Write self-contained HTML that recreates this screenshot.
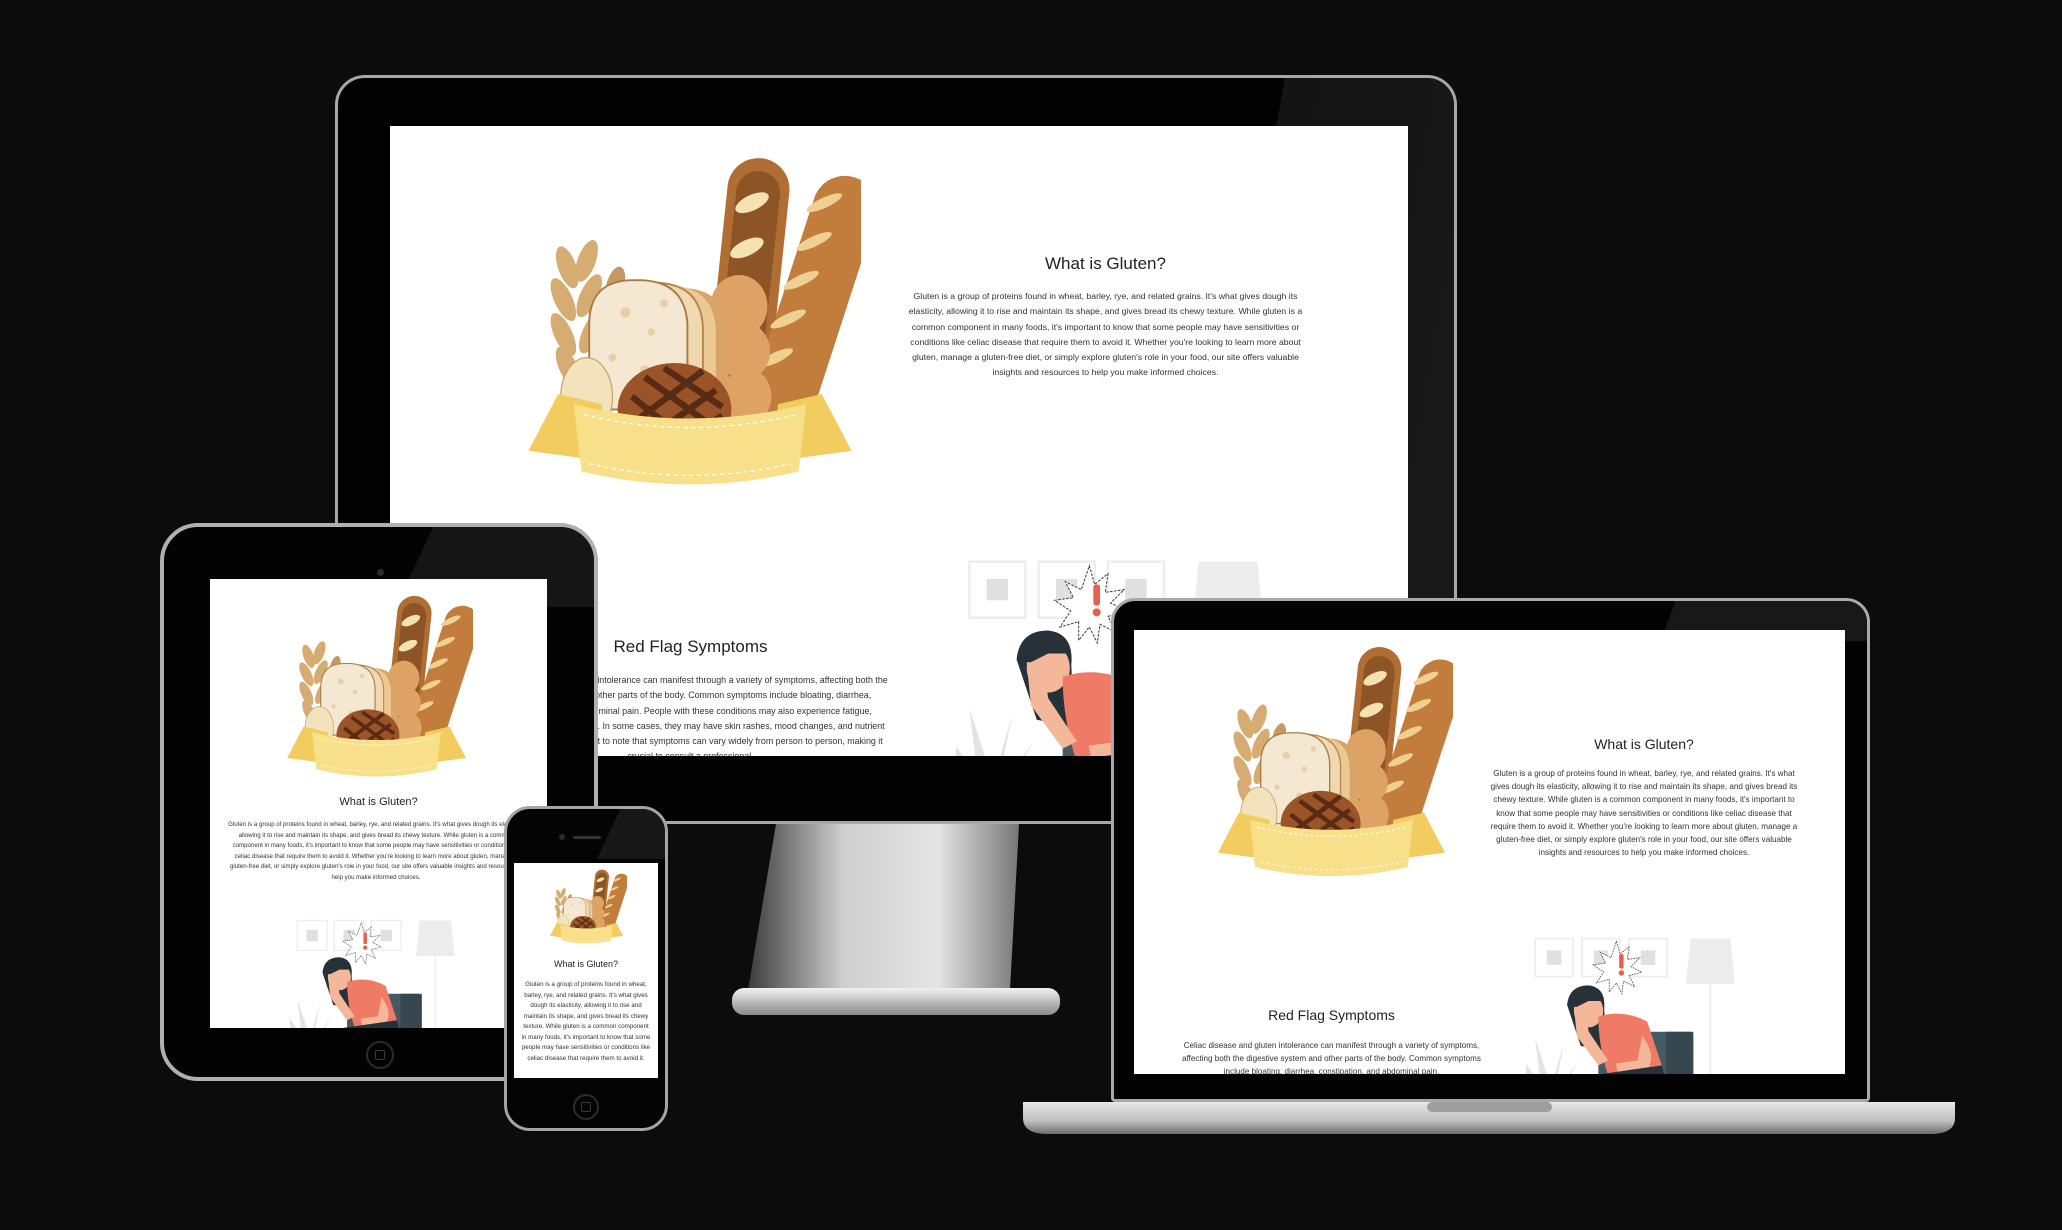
<!DOCTYPE html>
<html><head><meta charset="utf-8">
<style>
*{margin:0;padding:0;box-sizing:border-box}
html,body{width:2062px;height:1230px;overflow:hidden;background:#0c0c0c;font-family:"Liberation Sans",sans-serif}
.abs{position:absolute}
.scr{position:absolute;background:#fff;overflow:hidden}
.scr h2{position:absolute;font-weight:400;color:#222;text-align:center;white-space:nowrap}
.scr p{position:absolute;color:#333;text-align:center}
svg.il{position:absolute;display:block}
</style></head><body>
<svg width="0" height="0" style="position:absolute">
<defs>
<symbol id="bread" viewBox="0 0 260 260">
 <g fill="#d6ac72">
  <ellipse cx="35" cy="90" rx="7" ry="17" transform="rotate(-20 35 90)"/>
  <ellipse cx="50" cy="85" rx="7" ry="17" transform="rotate(20 50 85)"/>
  <ellipse cx="32" cy="115" rx="7" ry="18" transform="rotate(-25 32 115)"/>
  <ellipse cx="52" cy="112" rx="7" ry="18" transform="rotate(25 52 112)"/>
  <ellipse cx="32" cy="142" rx="7" ry="18" transform="rotate(-25 32 142)"/>
  <ellipse cx="54" cy="140" rx="7" ry="18" transform="rotate(25 54 140)"/>
  <ellipse cx="36" cy="168" rx="7" ry="18" transform="rotate(-25 36 168)"/>
  <ellipse cx="56" cy="166" rx="7" ry="18" transform="rotate(25 56 166)"/>
 </g>
 <g fill="#c49a62">
  <ellipse cx="72" cy="105" rx="7" ry="16" transform="rotate(15 72 105)"/>
  <ellipse cx="70" cy="130" rx="7" ry="16" transform="rotate(-15 70 130)"/>
  <ellipse cx="78" cy="128" rx="7" ry="16" transform="rotate(20 78 128)"/>
 </g>
 <rect x="150" y="5" width="48" height="220" rx="24" fill="#b06e35" transform="rotate(6 174 115)"/>
 <rect x="157" y="15" width="34" height="200" rx="17" fill="#8d5526" transform="rotate(6 174 115)"/>
 <g fill="#f4e2b3">
  <ellipse cx="178" cy="40" rx="14" ry="6" transform="rotate(-25 178 40)"/>
  <ellipse cx="174" cy="75" rx="14" ry="6" transform="rotate(-25 174 75)"/>
  <ellipse cx="170" cy="110" rx="14" ry="6" transform="rotate(-25 170 110)"/>
 </g>
 <rect x="198" y="15" width="50" height="225" rx="25" fill="#c27c3c" transform="rotate(18 223 127)"/>
 <g fill="#f0cf93">
  <ellipse cx="234" cy="40" rx="15" ry="4" transform="rotate(-25 234 40)"/>
  <ellipse cx="226" cy="70" rx="15" ry="4" transform="rotate(-25 226 70)"/>
  <ellipse cx="216" cy="100" rx="15" ry="4" transform="rotate(-25 216 100)"/>
  <ellipse cx="206" cy="130" rx="15" ry="4" transform="rotate(-25 206 130)"/>
  <ellipse cx="196" cy="160" rx="15" ry="4" transform="rotate(-25 196 160)"/>
 </g>
 <g fill="#dea265">
  <ellipse cx="168" cy="120" rx="22" ry="24"/>
  <ellipse cx="172" cy="155" rx="20" ry="22"/>
  <ellipse cx="174" cy="190" rx="19" ry="22"/>
 </g>
 <path d="M85 200V140Q85 105 120 106Q158 105 160 140V200Z" fill="#d9a468"/>
 <path d="M75 200V138Q75 103 110 104Q148 103 150 138V200Z" fill="#ecc992"/>
 <path d="M65 200V136Q65 101 100 102Q138 101 140 136V200Z" fill="#f0d9b0" stroke="#b7874f" stroke-width="1.5"/>
 <path d="M52 200V134Q52 99 88 100Q126 99 128 134V200Z" fill="#f5e8d2" stroke="#a77a48" stroke-width="1.5"/>
 <g fill="#e8cfa6"><circle cx="80" cy="125" r="4"/><circle cx="100" cy="140" r="3"/><circle cx="70" cy="160" r="3"/><circle cx="110" cy="118" r="3"/><circle cx="95" cy="170" r="4"/></g>
 <ellipse cx="50" cy="190" rx="20" ry="30" fill="#f3e3bc" stroke="#c9a56a"/>
 <ellipse cx="118" cy="200" rx="44" ry="36" fill="#9b5428"/>
 <g stroke="#5a2b14" stroke-width="5" fill="none"><path d="M85 190L135 230M95 175L150 215M110 168L155 198M80 215L140 170M90 228L150 185M110 232L155 205"/></g>
 <path d="M5 232L28 188L62 196L64 240Z" fill="#f2cc5e"/>
 <path d="M255 232L232 188L198 196L196 240Z" fill="#f2cc5e"/>
 <path d="M40 196Q130 218 220 196L214 248Q130 268 46 248Z" fill="#f8e08a"/>
 <path d="M48 204Q130 224 212 204M52 242Q130 260 208 242" stroke="#fff" stroke-dasharray="3 3" fill="none"/>
</symbol>
<symbol id="scene" viewBox="0 0 240 180">
 <g fill="#fff" stroke="#eee" stroke-width="2"><rect x="10" y="5" width="42" height="42"/><rect x="62" y="5" width="42" height="42"/><rect x="114" y="5" width="42" height="42"/></g>
 <g fill="#e0e0e0"><rect x="23" y="18" width="16" height="16"/><rect x="75" y="18" width="16" height="16"/><rect x="127" y="18" width="16" height="16"/></g>
 <path d="M182 5h44l5 50h-54z" fill="#ececec"/>
 <rect x="203" y="55" width="2" height="125" fill="#eee"/>
 <g fill="#e3e3e3"><path d="M10 180L-10 130L18 168Z"/><path d="M18 180L10 115L28 170Z"/><path d="M25 180L42 120L32 172Z"/><path d="M30 180L58 140L38 176Z"/><path d="M5 180L-20 150L10 175Z"/></g>
 <rect x="80" y="108" width="105" height="72" rx="4" fill="#455a64"/>
 <rect x="155" y="108" width="30" height="72" fill="#37474f"/>
 <path d="M100 8l4 14 10-8-2 14 14-2-10 10 12 6-14 4 6 12-12-6-2 14-6-12-8 10 0-14-14 4 8-12-12-8 14-2-6-12 12 6z" fill="#fff" stroke="#444" stroke-width="0.8" stroke-dasharray="2 1"/>
 <rect x="103" y="22" width="5" height="16" rx="2" fill="#e8604c"/>
 <circle cx="105.5" cy="43" r="3" fill="#e8604c"/>
 <g transform="translate(-28 -6) scale(1.08)">
 <path d="M68 78Q70 58 90 58Q108 60 106 82L108 125L82 120Z" fill="#263238"/>
 <ellipse cx="90" cy="84" rx="15" ry="17" fill="#f4b79a"/>
 <path d="M74 82Q72 68 90 66Q100 66 104 74L90 74Z" fill="#263238"/>
 <path d="M100 90Q125 82 150 95L165 140L110 150Q100 120 100 90Z" fill="#ef7b67"/>
 <path d="M75 80L78 110L100 140L110 135L90 105L86 80Z" fill="#f4b79a"/>
 <path d="M145 110Q160 130 150 145L120 148L118 138L140 135Z" fill="#f4b79a"/>
 <path d="M95 150L165 140L175 180H88Z" fill="#263238"/>
 </g>
</symbol>
</defs>
</svg>

<svg class="abs" style="left:0;top:0" width="2062" height="1230">
 <defs>
  <linearGradient id="st" x1="0" x2="1"><stop offset="0" stop-color="#3c3c3c"/><stop offset=".35" stop-color="#cfcfcf"/><stop offset=".7" stop-color="#e4e4e4"/><stop offset="1" stop-color="#777"/></linearGradient>
  <linearGradient id="bs" x1="0" y1="0" x2="0" y2="1"><stop offset="0" stop-color="#f2f2f2"/><stop offset="1" stop-color="#8a8a8a"/></linearGradient>
  <linearGradient id="lb" x1="0" y1="0" x2="0" y2="1"><stop offset="0" stop-color="#e8e8e8"/><stop offset=".6" stop-color="#bdbdbd"/><stop offset="1" stop-color="#6d6d6d"/></linearGradient>
 </defs>
 <path d="M776 824L1019 824L1010 990L748 990Z" fill="url(#st)"/>
 <rect x="732" y="988" width="328" height="27" rx="12" fill="url(#bs)"/>
 <path d="M1023 1102H1955V1118Q1955 1134 1930 1134H1048Q1023 1134 1023 1118Z" fill="url(#lb)"/>
 <rect x="1427" y="1102" width="125" height="10" rx="5" fill="#9e9e9e"/>
</svg>

<div class="abs" style="left:335px;top:75px;width:1122px;height:749px;background:#020202;border:3px solid #a8a8a8;border-radius:30px 30px 6px 6px;overflow:hidden">
 <div class="abs" style="left:860px;top:0;width:300px;height:760px;background:linear-gradient(100deg,transparent 0,transparent 20%,#141414 20%,#1a1a1a 100%)"></div>
</div>
<div class="scr" style="left:390px;top:126px;width:1018px;height:630px">
 <svg class="il" style="left:129px;top:25px" width="342" height="336"><use href="#bread"/></svg>
 <h2 style="left:517px;top:128px;width:397px;font-size:17px">What is Gluten?</h2>
 <p style="left:517px;top:163px;width:397px;font-size:8.7px;line-height:15.3px">Gluten is a group of proteins found in wheat, barley, rye, and related grains. It's what gives dough its elasticity, allowing it to rise and maintain its shape, and gives bread its chewy texture. While gluten is a common component in many foods, it's important to know that some people may have sensitivities or conditions like celiac disease that require them to avoid it. Whether you're looking to learn more about gluten, manage a gluten-free diet, or simply explore gluten's role in your food, our site offers valuable insights and resources to help you make informed choices.</p>
 <h2 style="left:102px;top:511px;width:397px;font-size:17px">Red Flag Symptoms</h2>
 <p style="left:102px;top:547px;width:397px;font-size:8.9px;line-height:15.3px">Celiac disease and gluten intolerance can manifest through a variety of symptoms, affecting both the digestive system and other parts of the body. Common symptoms include bloating, diarrhea, constipation, and abdominal pain. People with these conditions may also experience fatigue, headaches, and joint pain. In some cases, they may have skin rashes, mood changes, and nutrient deficiencies. It's important to note that symptoms can vary widely from person to person, making it crucial to consult a professional.</p>
 <svg class="il" style="left:566px;top:429px" width="320" height="240"><use href="#scene"/></svg>
</div>

<div class="abs" style="left:160px;top:523px;width:438px;height:558px;background:#030303;border:4px solid #b0b0b0;border-radius:38px;overflow:hidden">
 <div class="abs" style="left:180px;top:0;width:260px;height:80px;background:linear-gradient(115deg,transparent 30%,#151515 30%)"></div>
 <div class="abs" style="left:213px;top:42px;width:7px;height:7px;border-radius:50%;background:#2a2a3a"></div>
 <div class="abs" style="left:202px;top:514px;width:28px;height:28px;border-radius:50%;border:2px solid #2b2b2b"><div class="abs" style="left:7px;top:7px;width:10px;height:10px;border:1.5px solid #3a3a3a;border-radius:2px"></div></div>
</div>
<div class="scr" style="left:210px;top:579px;width:337px;height:449px">
 <svg class="il" style="left:70px;top:13px" width="193" height="186"><use href="#bread"/></svg>
 <h2 style="left:0;top:217px;width:337px;font-size:11px">What is Gluten?</h2>
 <p style="left:16px;top:241px;width:300px;font-size:6.1px;line-height:10.5px">Gluten is a group of proteins found in wheat, barley, rye, and related grains. It's what gives dough its elasticity, allowing it to rise and maintain its shape, and gives bread its chewy texture. While gluten is a common component in many foods, it's important to know that some people may have sensitivities or conditions like celiac disease that require them to avoid it. Whether you're looking to learn more about gluten, manage a gluten-free diet, or simply explore gluten's role in your food, our site offers valuable insights and resources to help you make informed choices.</p>
 <svg class="il" style="left:80px;top:338px" width="171" height="128"><use href="#scene"/></svg>
</div>

<div class="abs" style="left:1111px;top:598px;width:759px;height:504px;background:#030303;border:3px solid #a9a9a9;border-radius:24px 24px 4px 4px;overflow:hidden">
 <div class="abs" style="left:470px;top:0;width:290px;height:40px;background:linear-gradient(110deg,transparent 30%,#181818 30%)"></div>
</div>
<div class="scr" style="left:1134px;top:630px;width:711px;height:444px">
 <svg class="il" style="left:76px;top:12px" width="243" height="236"><use href="#bread"/></svg>
 <h2 style="left:356px;top:106px;width:308px;font-size:14px">What is Gluten?</h2>
 <p style="left:356px;top:137px;width:308px;font-size:8.1px;line-height:13.2px">Gluten is a group of proteins found in wheat, barley, rye, and related grains. It's what gives dough its elasticity, allowing it to rise and maintain its shape, and gives bread its chewy texture. While gluten is a common component in many foods, it's important to know that some people may have sensitivities or conditions like celiac disease that require them to avoid it. Whether you're looking to learn more about gluten, manage a gluten-free diet, or simply explore gluten's role in your food, our site offers valuable insights and resources to help you make informed choices.</p>
 <h2 style="left:43px;top:377px;width:309px;font-size:14px">Red Flag Symptoms</h2>
 <p style="left:43px;top:409px;width:309px;font-size:8.1px;line-height:13.2px">Celiac disease and gluten intolerance can manifest through a variety of symptoms, affecting both the digestive system and other parts of the body. Common symptoms include bloating, diarrhea, constipation, and abdominal pain.</p>
 <svg class="il" style="left:392px;top:304px" width="217" height="163"><use href="#scene"/></svg>
</div>

<div class="abs" style="left:504px;top:806px;width:164px;height:325px;background:#040404;border:3px solid #a5a5a5;border-radius:26px;overflow:hidden">
 <div class="abs" style="left:60px;top:0;width:110px;height:50px;background:linear-gradient(115deg,transparent 40%,#171717 40%)"></div>
 <div class="abs" style="left:52px;top:25px;width:6px;height:6px;border-radius:50%;background:#2a2a3a"></div>
 <div class="abs" style="left:66px;top:27px;width:28px;height:3px;border-radius:2px;background:#333"></div>
 <div class="abs" style="left:66px;top:285px;width:26px;height:26px;border-radius:50%;border:2px solid #2b2b2b"><div class="abs" style="left:6px;top:6px;width:10px;height:10px;border:1.5px solid #3a3a3a;border-radius:2px"></div></div>
</div>
<div class="scr" style="left:514px;top:863px;width:144px;height:215px">
 <svg class="il" style="left:32px;top:5px" width="81" height="76"><use href="#bread"/></svg>
 <h2 style="left:0;top:96px;width:144px;font-size:9px">What is Gluten?</h2>
 <p style="left:7px;top:117px;width:130px;font-size:6.2px;line-height:10.5px">Gluten is a group of proteins found in wheat, barley, rye, and related grains. It's what gives dough its elasticity, allowing it to rise and maintain its shape, and gives bread its chewy texture. While gluten is a common component in many foods, it's important to know that some people may have sensitivities or conditions like celiac disease that require them to avoid it.</p>
</div>
</body></html>
